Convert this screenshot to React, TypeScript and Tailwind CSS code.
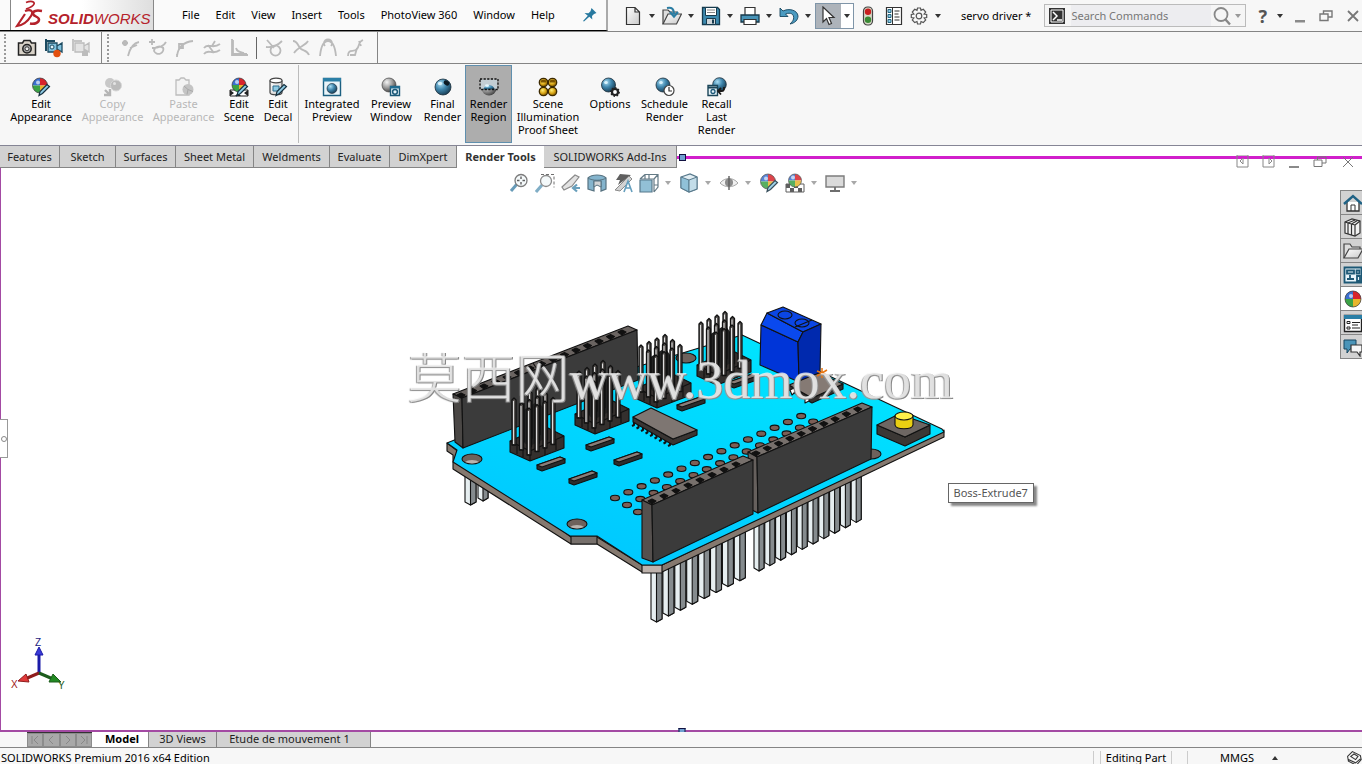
import React from 'react';

type IconProps = { children: React.ReactNode; size?: string; off?: boolean };

const Icon = ({ children, size = 'h-5 w-5', off = false }: IconProps) => (
  <svg viewBox="0 0 20 20" fill="none" className={`${size} shrink-0 ${off ? 'opacity-60' : ''}`} aria-hidden="true">
    {children}
  </svg>
);

const GradientDefs = () => (
  <svg className="absolute h-0 w-0" aria-hidden="true">
    <defs>
      <radialGradient id="ball" cx="0.35" cy="0.3" r="0.8">
        <stop offset="0" stopColor="#a8dcf2" />
        <stop offset="0.45" stopColor="#3f86ad" />
        <stop offset="1" stopColor="#123145" />
      </radialGradient>
      <radialGradient id="grayBall" cx="0.35" cy="0.3" r="0.8">
        <stop offset="0" stopColor="#f4f4f4" />
        <stop offset="0.5" stopColor="#9a9a9a" />
        <stop offset="1" stopColor="#333" />
      </radialGradient>
      <radialGradient id="goldBall" cx="0.4" cy="0.35" r="0.75">
        <stop offset="0" stopColor="#ffef7a" />
        <stop offset="0.5" stopColor="#d9a514" />
        <stop offset="1" stopColor="#5a3c00" />
      </radialGradient>
      <linearGradient id="board" x1="0" y1="1" x2="0.6" y2="0">
        <stop offset="0" stopColor="#00c3ff" />
        <stop offset="1" stopColor="#00e4ff" />
      </linearGradient>
      <linearGradient id="sheet" x1="0" y1="0" x2="1" y2="1">
        <stop offset="0" stopColor="#fff" />
        <stop offset="1" stopColor="#c9c9c9" />
      </linearGradient>
    </defs>
  </svg>
);

const Caret = ({ light = false }: { light?: boolean }) => (
  <svg viewBox="0 0 6 4" className={`h-1 w-1.5 shrink-0 ${light ? 'text-[#999]' : 'text-[#333]'}`} aria-hidden="true">
    <path d="M0 0h6L3 4z" fill="currentColor" />
  </svg>
);

const ColorBall = ({ cx = 9, cy = 8.5, r = 7.5 }) => (
  <g>
    <path d={`M${cx} ${cy}V${cy - r}A${r} ${r} 0 0 0 ${cx - r} ${cy}Z`} fill="#3b6fd0" />
    <path d={`M${cx} ${cy}V${cy - r}A${r} ${r} 0 0 1 ${cx + r} ${cy}Z`} fill="#d8242c" />
    <path d={`M${cx} ${cy}H${cx - r}A${r} ${r} 0 0 0 ${cx} ${cy + r}Z`} fill="#3ba245" />
    <path d={`M${cx} ${cy}H${cx + r}A${r} ${r} 0 0 1 ${cx} ${cy + r}Z`} fill="#e8b52c" />
    <circle cx={cx - 2} cy={cy - 3} r="2" fill="#fff" opacity="0.65" />
    <circle cx={cx} cy={cy} r={r} stroke="#333" strokeWidth="0.7" />
  </g>
);

const Pencil = () => (
  <path d="M18.5 9.5l-7 7-3.5 2 1-4 7-7z" fill="#8fcbe4" stroke="#16303f" strokeWidth="1.2" />
);

/* ---------- ribbon icons ---------- */

const EditAppearanceIcon = () => <Icon><ColorBall /><Pencil /></Icon>;

const CopyAppearanceIcon = () => (
  <Icon>
    <circle cx="7" cy="6" r="5" fill="#c8c8c8" />
    <circle cx="13" cy="8.5" r="5.5" fill="#bbb" stroke="#d8d8d8" />
    <circle cx="11.5" cy="6.5" r="1.5" fill="#e4e4e4" />
    <path d="M2 13l4 4m1-5v6H1" stroke="#b5b5b5" strokeWidth="2.4" />
  </Icon>
);

const PasteAppearanceIcon = () => (
  <Icon>
    <path d="M2 3h3l2-2h3l2 2h3v15H2z" stroke="#bdbdbd" fill="#f3f3f3" strokeWidth="1.3" />
    <circle cx="14" cy="12.5" r="5.5" fill="#c4c4c4" />
    <path d="M14 12.5L10 9m4 3.5l5 2m-5-2l-1 5" stroke="#a9a9a9" />
  </Icon>
);

const EditSceneIcon = () => (
  <Icon>
    <path d="M1 13h18v6H1z" fill="#fff" stroke="#222" />
    <path d="M1 13l4 3-4 3zm18 0l-4 3 4 3zM6 19l3-3 3 3z" fill="#222" />
    <ColorBall cx={10} cy={8} r={7} />
    <Pencil />
  </Icon>
);

const EditDecalIcon = () => (
  <Icon>
    <path d="M2 3.5v12c0 3 12 3 12 0v-12" fill="url(#sheet)" stroke="#444" strokeWidth="1.2" />
    <ellipse cx="8" cy="3.5" rx="6" ry="2.3" fill="#fff" stroke="#444" strokeWidth="1.2" />
    <path d="M5 9h6v5H5z" fill="#8fcbe4" stroke="#2c6c8c" />
    <Pencil />
  </Icon>
);

const IntegratedIcon = () => (
  <Icon>
    <path d="M1.5 1.5h17v17h-17z" fill="#e9f4f9" stroke="#1c5f80" strokeWidth="1.4" />
    <path d="M1 1h18v3.5H1z" fill="#2b7fa6" />
    <circle cx="10" cy="11.5" r="5" fill="url(#ball)" stroke="#123" strokeWidth="0.6" />
  </Icon>
);

const PreviewWindowIcon = () => (
  <Icon>
    <circle cx="8" cy="8" r="7" fill="url(#grayBall)" stroke="#444" strokeWidth="0.7" />
    <path d="M9.5 9.5h9v9h-9z" fill="#e6f3f9" stroke="#1b5878" strokeWidth="1.4" />
    <path d="M9 9h10v2.5H9z" fill="#1f6b90" />
    <circle cx="14" cy="14.8" r="2.4" stroke="#1b5878" strokeWidth="1.5" />
  </Icon>
);

const FinalIcon = () => (
  <Icon>
    <circle cx="10" cy="10" r="8" fill="url(#ball)" stroke="#1a2d3a" strokeWidth="0.8" />
    <ellipse cx="13.5" cy="6" rx="3" ry="2.2" fill="#0c1a24" transform="rotate(35 13.5 6)" />
    <ellipse cx="7" cy="6.5" rx="2.2" ry="1.8" fill="#d9f2fc" />
  </Icon>
);

const RegionIcon = () => (
  <Icon>
    <circle cx="10" cy="11" r="7.5" fill="url(#grayBall)" />
    <path d="M2 2.500h16v10H2z" fill="#c3cdd3" />
    <path d="M4 12.500a6.500 7 0 0 1 12 0z" fill="url(#ball)" />
    <ellipse cx="8" cy="8.500" rx="2" ry="1.300" fill="#e6f6fc" />
    <path d="M1 2h18v10.500H1z" stroke="#111" strokeWidth="1.300" strokeDasharray="2.200 1.400" />
  </Icon>
);

const ProofSheetIcon = () => (
  <Icon>
    {[[5.5, 5.5], [14.5, 5.5], [5.5, 14.5], [14.5, 14.5]].map(([x, y]) => (
      <circle key={`${x}-${y}`} cx={x} cy={y} r="4.2" fill="url(#goldBall)" stroke="#3c2900" strokeWidth="1.300" />
    ))}
    <path d="M2.500 5.500a3 3 0 0 1 6 0zM11.500 5.500a3 3 0 0 1 6 0z" fill="#7a5200" />
  </Icon>
);

const RenderOptionsIcon = () => (
  <Icon>
    <circle cx="8.500" cy="8" r="7" fill="url(#ball)" stroke="#1a2d3a" strokeWidth="0.800" />
    <ellipse cx="6" cy="5.500" rx="1.800" ry="1.500" fill="#d9f2fc" />
    <circle cx="15" cy="15" r="3" fill="#fff" stroke="#222" strokeWidth="2.200" />
    <circle cx="15" cy="15" r="4.200" stroke="#222" strokeWidth="1.400" strokeDasharray="1.600 1.600" />
  </Icon>
);

const ScheduleIcon = () => (
  <Icon>
    <circle cx="8" cy="8" r="7" fill="url(#ball)" stroke="#1a2d3a" strokeWidth="0.8" />
    <ellipse cx="6" cy="5.5" rx="1.8" ry="1.5" fill="#d9f2fc" />
    <circle cx="14" cy="13.5" r="5" fill="#fff" stroke="#444" strokeWidth="1.2" />
    <path d="M14 10v4h3" stroke="#333" strokeWidth="1.2" />
  </Icon>
);

const RecallIcon = () => (
  <Icon>
    <circle cx="12.5" cy="7.5" r="6.8" fill="url(#ball)" stroke="#1a2d3a" strokeWidth="0.8" />
    <path d="M1 8.500h9.500v10H1z" fill="#e6f3f9" stroke="#1b4558" strokeWidth="1.400" />
    <path d="M1 10.500h9.500" stroke="#1b4558" strokeWidth="2" />
    <circle cx="6" cy="14.500" r="2" stroke="#1b5878" strokeWidth="1.300" />
    <path d="M11 14h4c2.500 0 2-3 2-4m-3 1l-3 3 3 3.500" stroke="#1a1a1a" strokeWidth="1.800" />
  </Icon>
);

/* ---------- capture and sketch icons ---------- */

const CameraIcon = () => (
  <Icon>
    <path d="M1.500 5h4L7 2.500h6L14.500 5h4v12h-17z" fill="#d8d2c8" stroke="#222" strokeWidth="1.500" />
    <circle cx="10" cy="10.800" r="4.200" fill="#aaa" stroke="#222" strokeWidth="1.500" />
    <circle cx="10" cy="10.800" r="2" fill="#efefef" stroke="#333" />
  </Icon>
);

const RecordIcon = () => (
  <Icon>
    <path d="M2 1v12m0-10h9" stroke="#1b4a60" strokeWidth="2" />
    <path d="M4 5h9v9H4zM13 8l5-3v9l-5-3z" fill="#7fc0dc" stroke="#1b4a60" strokeWidth="1.300" />
    <circle cx="8" cy="9" r="2" fill="#e2f4fb" stroke="#1b4a60" />
    <circle cx="13" cy="15.500" r="3.700" fill="#e2500f" />
  </Icon>
);

const StopRecordIcon = () => (
  <Icon>
    <path d="M2 1v12m0-10h9" stroke="#c4c4c4" strokeWidth="2" />
    <path d="M4 5h9v9H4zM13 8l5-3v9l-5-3z" fill="#e4e4e4" stroke="#bcbcbc" strokeWidth="1.300" />
    <path d="M11 13h6v5h-6z" fill="#bcbcbc" />
  </Icon>
);

const sketchPaths = [
  'M1 5h6M4 2v6M2 3l4 4M6 3L2 7M18 4C12 5 9 10 7 18M9 10l7-3',
  'M1 4h6M4 1v6M4 10c8 0 12-2 14-6M15 9a4.500 4.500 0 1 1-9 4c0-4 6-6 9-3',
  'M2 18C3 10 8 4 18 3M4 6h4v4H4zM2 16v3',
  'M2 10c4-6 8 2 16-4M2 16c4-6 8 2 16-4M6 7l6 8M13 3l-3 5',
  'M3 1v16h16M4 2v14h14M7 10c1 4 4 4 8 5',
];

const curvePaths = [
  'M2 9c7 1 12-2 16-6M15 9a5 5 0 1 1-7 0c2-2 5-2 7 0M3 2l7 8',
  'M2 3c5 0 5 6 8 8s6 1 8 6M17 3c-2 4-10 6-14 12',
  'M2 18C3 8 5 3 10 3s7 5 8 15M7 8a4 4 0 1 1 6 0',
  'M3 18c0-8 6-3 9-7s1-7 6-9M5 17h5l2-7M14 3l2 5',
];

const SketchIcon = ({ d }: { d: string }) => (
  <Icon><path d={d} stroke="#bababa" strokeWidth="1.8" /></Icon>
);

const Grip = () => <div className="h-7 w-[2px] border-l-2 border-dotted border-[#999]" />;

/* ---------- quick access icons ---------- */

const NewIcon = () => (
  <Icon><path d="M3.500 1.500h8.500L16.500 6v12.500h-13zM12 1.500V6h4.500" fill="url(#sheet)" stroke="#333" strokeWidth="1.200" /></Icon>
);

const OpenIcon = () => (
  <Icon>
    <path d="M1 18V4h5l2 2h7v3" fill="#ddd" stroke="#444" strokeWidth="1.200" />
    <path d="M1 18l5-10h13.500l-5 10z" fill="url(#sheet)" stroke="#444" strokeWidth="1.200" />
    <path d="M5 2c5-1 7 1 7 6m-4-2l4 4.500L16 6" stroke="#2a7da3" strokeWidth="2.200" />
  </Icon>
);

const SaveIcon = () => (
  <Icon>
    <path d="M1.500 1.500h15l2 2v15h-17z" fill="#3c89ae" stroke="#163a4d" strokeWidth="1.300" />
    <path d="M4.500 1.500h11v8h-11z" fill="#fff" stroke="#163a4d" />
    <path d="M6 4h8M6 6.500h8" stroke="#888" />
    <path d="M5.500 12.500h9v6h-9z" fill="#cfd6da" stroke="#163a4d" />
    <path d="M11 13.500h2v4h-2z" fill="#163a4d" />
  </Icon>
);

const PrintIcon = () => (
  <Icon>
    <path d="M5 9V1.500h10V9" fill="#fff" stroke="#333" strokeWidth="1.200" />
    <path d="M1 9h18v7H1z" fill="#4793b7" stroke="#16394b" strokeWidth="1.300" />
    <path d="M4 13.500h12v5H4z" fill="#fff" stroke="#333" strokeWidth="1.200" />
  </Icon>
);

const UndoIcon = () => (
  <Icon><path d="M1 2v8.500h8L6.500 8c5-2 9 0 8 5-.5 2-2 3.500-3.500 5 5-1 8-4 8-8C18.500 4 10 2 4 5z" fill="#4b9bc1" stroke="#16455e" strokeWidth="0.900" /></Icon>
);

const TrafficIcon = () => (
  <Icon>
    <rect x="5.500" y="1" width="9" height="18" rx="4" fill="#d9d9c8" stroke="#444" strokeWidth="1.200" />
    <circle cx="10" cy="5.800" r="3.200" fill="#c82020" />
    <circle cx="10" cy="13.800" r="3.200" fill="#3a8a35" />
  </Icon>
);

const ListIcon = () => (
  <Icon>
    <path d="M2.500 1.500h15v17h-15z" fill="#fff" stroke="#333" strokeWidth="1.200" />
    <path d="M8.500 2v16" stroke="#333" />
    <path d="M4 3.500h3v3H4zM4 8.500h3v3H4zM4 13.500h3v3H4z" fill="#8ccbe6" stroke="#24647f" />
    <path d="M10.500 5h5M10.500 8h4M10.500 11h5M10.500 14h5" stroke="#333" strokeWidth="1.200" />
  </Icon>
);

const GearIcon = () => (
  <Icon>
    <path d="M8.500 2h3l.5 2.300 2.300-1L16.700 6l-1.600 2 2.600.5v3l-2.600.5 1.600 2-2.400 2.600-2.300-1.100-.5 2.500h-3L8 15.500l-2.300 1.100L3.300 14l1.600-2-2.600-.5v-3L4.900 8 3.300 6l2.400-2.700 2.300 1z" stroke="#555" strokeWidth="1.200" />
    <circle cx="10" cy="10" r="2.800" stroke="#555" strokeWidth="1.200" />
  </Icon>
);

const PinIcon = () => (
  <svg viewBox="0 0 14 14" className="h-3.5 w-3.5" aria-hidden="true">
    <path d="M8.500 0l5 5-2.500 1-2 2 .3 3.500-3-2.800L1 13.500 0 13l4.800-5.200L1.500 5l4 .3 2-2z" fill="#28799f" />
  </svg>
);

const quickItems: { name: string; icon: React.ReactNode; width: string }[] = [
  { name: 'New', icon: <NewIcon />, width: 'w-[39px]' },
  { name: 'Open', icon: <OpenIcon />, width: 'w-[39px]' },
  { name: 'Save', icon: <SaveIcon />, width: 'w-[39px]' },
  { name: 'Print', icon: <PrintIcon />, width: 'w-[39px]' },
  { name: 'Undo', icon: <UndoIcon />, width: 'w-9' },
];

const WindowButtons = ({ small = false }: { small?: boolean }) => (
  <>
    <button aria-label="Minimize" className="flex w-[26px] justify-center">
      <svg viewBox="0 0 14 14" className="h-3.5 w-3.5"><path d={small ? 'M2 11h10v2H2z' : 'M2 11h10v2.500H2z'} fill="#8a8a8a" /></svg>
    </button>
    <button aria-label="Restore" className="flex w-[26px] justify-center">
      <svg viewBox="0 0 14 14" className="h-3.5 w-3.5" fill="none" stroke="#777" strokeWidth={small ? 1 : 1.4}>
        <path d="M1 5h8v6.500H1zM4.500 5V2H13v6H9" />
      </svg>
    </button>
    <button aria-label="Close" className={small ? 'flex w-[29px] justify-center' : 'flex w-[23px] justify-end pr-0.5'}>
      <svg viewBox="0 0 14 14" className="h-3.5 w-3.5" stroke="#777" strokeWidth={small ? 1 : 1.8}><path d="M2 2l10 10M12 2L2 12" /></svg>
    </button>
  </>
);

const Logo = () => (
  <div className="flex w-[142px] items-center bg-gradient-to-r from-white via-white to-[#dedede] pl-[3px]">
    <svg viewBox="0 0 30 30" className="h-[30px] w-[30px] shrink-0" fill="none" stroke="#b5222b" aria-hidden="true">
      <path d="M12 2.500c5-2 9-1 8 1.500-1 2.500-5 4-8 5" strokeWidth="1.800" />
      <path d="M11 11c6-2 9 0 6 5-3 5-7 9-14 10l8-12" strokeWidth="2.200" />
      <path d="M28 11c-6-1-9 0-9 2.500 0 3 6 3 6 6 0 3-4 5-9 4" strokeWidth="2.500" />
    </svg>
    <span className="mt-2 ml-1 font-['Liberation_Sans',Arial,sans-serif] text-[15px] leading-4 text-[#b5222b] italic">
      <b>SOLID</b>WORKS
    </span>
  </div>
);

const TitleBar = () => (
  <header className="flex h-8 shrink-0 border-b border-[#858585]">
    <div className="flex border-r-2 border-b border-r-[#aaa] border-b-black bg-[#fafafa] pl-2.5">
      <div className="flex border-x border-[#888]"><Logo /></div>
      <nav className="flex items-center gap-4 pl-7">
        {['File', 'Edit', 'View', 'Insert', 'Tools', 'PhotoView 360', 'Window', 'Help'].map((m) => (
          <button key={m}>{m}</button>
        ))}
      </nav>
      <button aria-label="Pin menu" className="mr-[9px] ml-7"><PinIcon /></button>
    </div>
    <div className="flex items-center pl-[15px]">
      {quickItems.map(({ name, icon, width }) => (
        <div key={name} className={`flex items-center gap-1.5 ${width}`}>
          <button aria-label={name}>{icon}</button>
          <button aria-label={`${name} options`}><Caret /></button>
        </div>
      ))}
      <div className="flex h-[26px] w-[39px] border border-[#7f95a8] bg-white">
        <button aria-label="Select" className="flex w-[25px] items-center justify-center bg-[#adb3ba]">
          <Icon><path d="M5 1v15l3.500-3.500 2.500 6 2.500-1-2.500-6h5z" fill="#fff" stroke="#333" strokeWidth="1.200" /></Icon>
        </button>
        <button aria-label="Select options" className="flex flex-1 items-center justify-center"><Caret /></button>
      </div>
      <button aria-label="Rebuild" className="ml-1"><TrafficIcon /></button>
      <button aria-label="File properties" className="ml-1.5"><ListIcon /></button>
      <button aria-label="Options" className="ml-[5px]"><GearIcon /></button>
      <button aria-label="Options list" className="ml-1.5"><Caret /></button>
    </div>
    <div className="ml-5 flex flex-1 items-center whitespace-nowrap">servo driver *</div>
    <div className="flex items-center">
      <label className="flex h-[23px] w-[202px] items-center border border-[#bbb] bg-[#f5f5f5] pl-1">
        <svg viewBox="0 0 16 16" className="h-4 w-4 shrink-0" fill="none" aria-hidden="true">
          <path d="M0 0h16v16H0z" fill="#333" />
          <path d="M2 2h12v12H2z" stroke="#fff" />
          <path d="M4 4l4 4-4 4M8 12h5" stroke="#fff" strokeWidth="1.500" />
        </svg>
        <input
          aria-label="Search Commands"
          placeholder="Search Commands"
          className="ml-1.5 h-full w-[140px] bg-[#ededf0] placeholder:text-[#777]"
        />
        <Icon>
          <circle cx="10" cy="8.500" r="6.500" stroke="#888" strokeWidth="1.800" />
          <path d="M14.500 13.500l4.500 5" stroke="#888" strokeWidth="2.400" />
        </Icon>
        <span className="ml-1"><Caret light /></span>
      </label>
      <button aria-label="Help" className="ml-3 text-[18px] font-bold text-[#555]">?</button>
      <button aria-label="Help options" className="mr-1 ml-2.5"><Caret /></button>
      <WindowButtons />
    </div>
  </header>
);

const SketchToolbar = () => (
  <div className="flex h-8 shrink-0 items-center border-b border-[#858585]">
    <div className="flex h-full items-center gap-[7px] border-r border-[#858585] pr-2.5 pl-1">
      <Grip />
      <button aria-label="Capture" className="ml-1"><CameraIcon /></button>
      <button aria-label="Record"><RecordIcon /></button>
      <button aria-label="Stop" disabled><StopRecordIcon /></button>
    </div>
    <div className="flex h-full items-center gap-[7px] border-r border-[#858585] pr-3 pl-[5px]">
      <div className="pr-[5px]"><Grip /></div>
      {sketchPaths.map((d, i) => (
        <button key={d} disabled aria-label={`Sketch tool ${i + 1}`}><SketchIcon d={d} /></button>
      ))}
      <span className="h-[22px] w-px bg-[#666]" />
      {curvePaths.map((d, i) => (
        <button key={d} disabled aria-label={`Curve tool ${i + 1}`}><SketchIcon d={d} /></button>
      ))}
    </div>
  </div>
);

type RibbonItem = { lines: string[]; icon: React.ReactNode; width: string; disabled?: boolean; active?: boolean };

const ribbonEdit: RibbonItem[] = [
  { lines: ['Edit', 'Appearance'], icon: <EditAppearanceIcon />, width: 'w-[72px]' },
  { lines: ['Copy', 'Appearance'], icon: <CopyAppearanceIcon />, width: 'w-[71px]', disabled: true },
  { lines: ['Paste', 'Appearance'], icon: <PasteAppearanceIcon />, width: 'w-[71px]', disabled: true },
  { lines: ['Edit', 'Scene'], icon: <EditSceneIcon />, width: 'w-10' },
  { lines: ['Edit', 'Decal'], icon: <EditDecalIcon />, width: 'w-[38px]' },
];

const ribbonRender: RibbonItem[] = [
  { lines: ['Integrated', 'Preview'], icon: <IntegratedIcon />, width: 'w-[60px]' },
  { lines: ['Preview', 'Window'], icon: <PreviewWindowIcon />, width: 'w-[58px]' },
  { lines: ['Final', 'Render'], icon: <FinalIcon />, width: 'w-[45px]' },
  { lines: ['Render', 'Region'], icon: <RegionIcon />, width: 'w-[47px]', active: true },
  { lines: ['Scene', 'Illumination', 'Proof Sheet'], icon: <ProofSheetIcon />, width: 'w-[72px]' },
  { lines: ['Options'], icon: <RenderOptionsIcon />, width: 'w-[52px]' },
  { lines: ['Schedule', 'Render'], icon: <ScheduleIcon />, width: 'w-[57px]' },
  { lines: ['Recall', 'Last', 'Render'], icon: <RecallIcon />, width: 'w-[47px]' },
];

const RibbonButton = ({ item }: { item: RibbonItem }) => (
  <button
    disabled={item.disabled}
    className={`flex h-[78px] shrink-0 flex-col items-center border pt-[11px] leading-[13px] whitespace-nowrap ${item.width} ${
      item.active ? 'border-[#5f8fae] bg-[#adadad]' : 'border-transparent'
    } ${item.disabled ? 'text-[#b8b8b8]' : 'text-black'}`}
  >
    {item.icon}
    <span className="flex flex-col items-center">
      {item.lines.map((l) => <span key={l}>{l}</span>)}
    </span>
  </button>
);

const Ribbon = () => (
  <div className="flex h-[82px] shrink-0 border-b border-[#858595] pt-px pl-[5px]">
    {ribbonEdit.map((item) => <RibbonButton key={item.lines.join(' ')} item={item} />)}
    <span className="mr-[3px] ml-px h-[78px] w-px bg-[#bbb]" />
    {ribbonRender.map((item) => <RibbonButton key={item.lines.join(' ')} item={item} />)}
  </div>
);

const tabs = [
  { name: 'Features', width: 'w-[60px]' },
  { name: 'Sketch', width: 'w-[56px]' },
  { name: 'Surfaces', width: 'w-[60px]' },
  { name: 'Sheet Metal', width: 'w-[78px]' },
  { name: 'Weldments', width: 'w-[76px]' },
  { name: 'Evaluate', width: 'w-[60px]' },
  { name: 'DimXpert', width: 'w-[67px]' },
  { name: 'Render Tools', width: 'w-[87px]' },
  { name: 'SOLIDWORKS Add-Ins', width: 'w-[133px]' },
];

const TabRow = () => (
  <div className="flex h-[22px] shrink-0 bg-white">
    <div role="tablist" className="flex">
      {tabs.map(({ name, width }) => {
        const active = name === 'Render Tools';
        return (
          <button
            key={name}
            role="tab"
            aria-selected={active}
            className={`${width} shrink-0 whitespace-nowrap ${
              active ? 'bg-white font-bold text-[#333]' : 'border-r border-b border-[#858585] bg-[#d2d2d2] text-[#222]'
            }`}
          >
            {name}
          </button>
        );
      })}
    </div>
    <div className="relative flex-1">
      <div className="mt-2.5 flex h-[3px] items-center bg-[#d11fcb]">
        <span className="ml-0.5 h-[7px] w-[7px] border border-[#101040] bg-[#6f9fd0]" />
      </div>
      <div className="absolute right-0 -bottom-px flex items-center">
        {['M2 0v12h11V0zM8 3L5 6l3 3z', 'M2 0v12h11V0zM8 3l3 3-3 3z'].map((d) => (
          <button key={d} aria-label="Switch pane" className="flex w-[26px] justify-center">
            <svg viewBox="0 0 14 14" className="h-3.5 w-3.5" fill="none" stroke="#888"><path d={d} /></svg>
          </button>
        ))}
        <WindowButtons small />
      </div>
    </div>
  </div>
);

/* ---------- heads-up view toolbar ---------- */

const viewTools: { name: string; caret?: boolean; icon: React.ReactNode }[] = [
  { name: 'Zoom to fit', icon: <Icon><path d="M8 11l-6 7" stroke="#4d8aac" strokeWidth="3" /><circle cx="12" cy="7.500" r="6" fill="#f3f8fa" stroke="#666" strokeWidth="1.300" /><path d="M12 3.500v8M8 7.500h8" stroke="#444" strokeWidth="1.400" strokeDasharray="2.500 3" /></Icon> },
  { name: 'Zoom area', icon: <Icon><path d="M7 12l-6 7" stroke="#6ba0bd" strokeWidth="3" /><path d="M6 1.500h13v13" stroke="#555" strokeDasharray="3 2" /><circle cx="11" cy="8" r="5.500" fill="#f3f8fa" stroke="#777" strokeWidth="1.300" /></Icon> },
  { name: 'Previous view', icon: <Icon><path d="M1 14L14 2l4 2-7 9-8 4z" fill="#ddd" stroke="#777" strokeWidth="1.200" /><path d="M19 15h-6m3-3.500L12 15l4 3.500" stroke="#4f8fb0" strokeWidth="2.200" /></Icon> },
  { name: 'Section view', icon: <Icon><path d="M1 5c4-4 14-4 18 0v11l-5 2V8H7v10l-6-2z" fill="#6fa8c5" stroke="#3b5b6c" strokeWidth="1.200" /><path d="M1 5c4 3 14 3 18 0" stroke="#3b5b6c" /><path d="M7 8h7v6l-4-2-3 2z" fill="#c9cdd0" stroke="#3b5b6c" /></Icon> },
  { name: 'Dynamic view', icon: <Icon><path d="M7 1L3 7h4l-2 5L18 2z" fill="#444" /><path d="M2 17L16 3l3 3L7 18z" fill="#ccc" stroke="#777" /><path d="M11 19l4-11 4 11m-6-4h5" stroke="#4b8fb3" strokeWidth="1.600" /></Icon> },
  { name: 'View orientation', caret: true, icon: <Icon><path d="M6 6V1.500h13V14l-4 5M1 6h14v13M15 6l4-4.500M6 1.500L1 6m9-5v5m5 6h4" stroke="#4a6472" strokeWidth="1.200" /><path d="M1 7h12v12H1z" fill="#7fb6d0" stroke="#3b6278" strokeWidth="1.200" /></Icon> },
  { name: 'Display style', caret: true, icon: <Icon><path d="M2 4l9-3 7 3v12l-8 3-8-4z" fill="#dcebf2" stroke="#3b6278" strokeWidth="1.200" /><path d="M2 4l8 3v12l-8-4z" fill="#7db7d2" stroke="#3b6278" /><path d="M10 7l8-3v12l-8 3z" fill="#b9d8e6" stroke="#3b6278" /></Icon> },
  { name: 'Hide/show', caret: true, icon: <Icon><path d="M1 10c5-6 13-6 18 0-5 5-13 5-18 0z" fill="#eee" stroke="#999" /><circle cx="10" cy="9.500" r="4" fill="#777" /><path d="M10 3v14" stroke="#444" strokeWidth="1.400" /></Icon> },
  { name: 'Edit appearance', icon: <Icon><ColorBall /><Pencil /></Icon> },
  { name: 'Apply scene', caret: true, icon: <Icon><path d="M1 11h18v8H1z" fill="#fff" stroke="#444" /><path d="M1 11h4v4H1zM5 15h4v4H5zM9 11h4v4H9zM13 15h4v4h-4z" fill="#444" /><ColorBall cx={10} cy={7.500} r={6.500} /></Icon> },
  { name: 'View settings', caret: true, icon: <Icon><path d="M1 3h18v11H1z" fill="#d4d4d4" stroke="#666" strokeWidth="1.400" /><path d="M10 14v4m-5 0h10" stroke="#555" strokeWidth="1.800" /></Icon> },
];

const ViewToolbar = () => (
  <div className="flex h-[30px] items-center justify-center gap-1.5 pl-1">
    {viewTools.map(({ name, icon, caret }) => (
      <button key={name} aria-label={name} className="flex items-center gap-1.5 opacity-85">
        {icon}
        {caret && <span className="mr-0.5"><Caret light /></span>}
      </button>
    ))}
  </div>
);

/* ---------- the model ---------- */

// one block of 4 x 3 header pins, (x, y) is the bottom corner of its base
const PinBlock = ({ x, y }: { x: number; y: number }) => (
  <g transform={`translate(${x} ${y})`}>
    <path d="M-20-20l34-15 20 10v12L0 0l-20-9z" fill="#34302e" />
    <path d="M-20-20L0-10l34-15M0-10V0M-13-17v10M-7-14v10M15-17v11M26-21v10" />
    <path d="M-8-50L8-60 14-52V-22L0-15l-8-4z" fill="#222" stroke="none" />
    {[0, 1, 2].map((j) =>
      [3, 2, 1, 0].map((i) => {
        const px = -16 + j * 7.5 + i * 8;
        const py = -61 + j * 5 - i * 3.5;
        return (
          <g key={`${j}-${i}`}>
            <path d={`M${px - 2} ${py + 45}V${py}l2-2 2 2v45z`} fill="#55514f" strokeWidth="1.300" />
            <path d={`M${px - 0.500} ${py + 1}v43`} stroke="#ddd" />
          </g>
        );
      }),
    )}
  </g>
);

const LegPin = ({ x, top, bottom, w }: { x: number; top: number; bottom: number; w: number }) => (
  <g>
    <path d={`M${x} ${top}h${w}V${bottom - 2}l${-w / 2} 3-${w / 2}-3z`} fill="#e6eef0" />
    <path d={`M${x + w / 2} ${top}h${w / 2}V${bottom - 2}l${-w / 2} 3z`} fill="#858b8e" />
  </g>
);

const Resistor = ({ x, y }: { x: number; y: number }) => (
  <g transform={`translate(${x} ${y})`}>
    <path d="M-14 1L9-7l5 2v4L-9 7l-5-2z" fill="#2d2d2d" />
    <path d="M-14 1L9-7l5 2L-9 3z" fill="#8a7d78" />
  </g>
);

// sockets along the top of a female header
const Sockets = ({ x, y, dx, dy, n }: { x: number; y: number; dx: number; dy: number; n: number }) => (
  <>
    {Array.from({ length: n }, (_, i) => (
      <path key={i} d={`M${x + i * dx} ${y + i * dy}l4-2 4 2-4 3z`} fill="#111" />
    ))}
  </>
);

const vias = [0, 1, 2, 3, 4, 5, 6, 7, 8, 9, 10, 11, 12, 13, 14];

const Model = () => (
  <svg
    viewBox="402 300 560 330"
    className="h-[330px] w-[560px]"
    fill="none"
    stroke="#111"
    strokeWidth="1.1"
    strokeLinejoin="round"
    role="img"
    aria-label="Servo driver shield"
  >
    <LegPin x={478} top={474} bottom={500} w={10} />
    <LegPin x={465} top={470} bottom={504} w={11} />
    {[7, 6, 5, 4, 3, 2, 1, 0].map((i) => (
      <LegPin key={i} x={651 + i * 11.9} top={570 - i * 5.9} bottom={621 - i * 5.9} w={11} />
    ))}
    {[9, 8, 7, 6, 5, 4, 3, 2, 1, 0].map((i) => (
      <LegPin key={i} x={754 + i * 10.800} top={522 - i * 5} bottom={570 - i * 5.400} w={10} />
    ))}

    <path d="M447 443v8l6 4v14l118 75h26l45 28h20l282-135v-7l-282 135h-20l-45-28h-26z" fill="#85796f" />
    <path d="M571 536h26v8h-26z" fill="#77706c" />
    <path d="M642 565h20v8h-20z" fill="#bdb2ac" />
    <path d="M447 443l186-75 109-33 200 94 2 3-282 133h-20l-45-29h-27L453 462l4-12z" fill="url(#board)" />

    {[[472, 459], [577, 524], [686, 358], [871, 454]].map(([x, y]) => (
      <g key={x}>
        <ellipse cx={x} cy={y} rx="10" ry="5" fill="#6e625c" />
        {x < 600 && <path d={`M${x - 7} ${y + 3}a8 4 0 0 1 14 0a10 5 0 0 1-14 0`} fill="#b9b3ae" stroke="none" />}
      </g>
    ))}
    {vias.map((i) => (
      <g key={i} fill="#7c5f56">
        <ellipse cx={615 + i * 13.300} cy={498 - i * 5.850} rx="4.500" ry="2.700" />
        <ellipse cx={627 + i * 13.300} cy={505 - i * 5.950} rx="4.500" ry="2.700" />
        <ellipse cx={638 + i * 13.300} cy={512 - i * 6} rx="4.500" ry="2.700" />
      </g>
    ))}

    {/* back header */}
    <path d="M453 394l175-68 9 4-175 68z" fill="#6a6461" />
    <path d="M453 394l9 4 1 50-8-6z" fill="#4a4745" />
    <path d="M462 398l175-68 1 50-175 68z" fill="#3b3b3b" />
    <path d="M533 363l4 6v50" />
    <Sockets x={457} y={395} dx={11.500} dy={-4.500} n={15} />

    <Resistor x={551} y={464} />
    <Resistor x={583} y={478} />
    <Resistor x={600} y={444} />
    <Resistor x={628} y={459} />
    <Resistor x={691} y={404} />
    <Resistor x={743} y={381} />

    <PinBlock x={717} y={385} />
    <PinBlock x={657} y={408} />
    <PinBlock x={595} y={434} />
    <PinBlock x={530} y={461} />

    {/* driver chip */}
    {[0, 1, 2, 3, 4, 5, 6, 7, 8].map((i) => (
      <path key={i} d={`M${634 + i * 4.500} ${420 + i * 2.500}v5l-2 1`} strokeWidth="2" />
    ))}
    <path d="M633 417l40 22 24-9v5l-24 10-40-23z" fill="#3a3533" />
    <path d="M633 417l18-9 46 22-24 9z" fill="#7e7672" />

    {/* screw terminal */}
    <path d="M761 325l37 17 1 40-39-17z" fill="#0035d8" />
    <path d="M767 313l36 19-5 10-37-17z" fill="#0a49ee" />
    <path d="M767 313l16-6 38 17-18 8z" fill="#0b46e4" />
    <path d="M821 324l-18 8-5 10 1 40 21-9z" fill="#0029ae" />
    <path d="M795 327l17-7" />
    <ellipse cx="785" cy="315" rx="7" ry="4" />
    <ellipse cx="802" cy="323" rx="7" ry="4" />

    <path d="M789 385l23 13 31-14v5l-31 14-23-13z" fill="#33302e" />
    <path d="M789 385l30-12 24 11-31 14z" fill="#857a74" />
    <path d="M790 390l4-2 1 4-3 3zM805 397l4-1v5l-4 2z" fill="#fff" />
    <path d="M822 368v10M817 371l10 4M827 370l-10 6" stroke="#e87511" strokeWidth="1.500" />

    {/* push button */}
    <path d="M877 425l28 12 25-12v9l-25 12-28-12z" fill="#3b3734" />
    <path d="M877 425l22-11 31 11-25 12z" fill="#6e6763" />
    <path d="M895 416v9c1 5 17 5 18 0v-9z" fill="#e9cf12" />
    <ellipse cx="904" cy="416" rx="9" ry="4" fill="#fff04a" />

    {/* front headers */}
    <path d="M748 452l114-49 10 4-115 50z" fill="#77706c" />
    <path d="M748 452l9 5 1 56-8-4z" fill="#66605d" />
    <path d="M757 457l115-50-1 52-113 54z" fill="#3b3b3b" />
    <Sockets x={752} y={453} dx={11.300} dy={-4.900} n={10} />
    <path d="M642 500l101-44 10 4-101 45z" fill="#77706c" />
    <path d="M642 500l10 5 1 57-11-4z" fill="#55504e" />
    <path d="M652 505l101-45v54l-100 48z" fill="#3b3b3b" />
    <Sockets x={648} y={501} dx={12} dy={-5.300} n={8} />
  </svg>
);

const Triad = () => (
  <svg viewBox="0 0 56 58" className="h-[58px] w-14" fill="none" aria-hidden="true">
    <path d="M30 37V18" stroke="#1b1ba8" strokeWidth="3" />
    <path d="M26 19l4-8 4 8z" fill="#3a3ad8" stroke="#1b1ba8" />
    <path d="M30 37l-14 6" stroke="#8f1d1d" strokeWidth="3" />
    <path d="M17 38l-8 7 11 1z" fill="#e03a3a" stroke="#8f1d1d" />
    <path d="M30 37l14 6" stroke="#1c5c1c" strokeWidth="3" />
    <path d="M44 38l8 8-12 0z" fill="#228a22" stroke="#1c5c1c" />
    <g className="font-['Liberation_Sans',Arial,sans-serif] text-[10px]">
      <text x="26" y="10" fill="#1b1b80">Z</text>
      <text x="2" y="52" fill="#a02020">X</text>
      <text x="49" y="53" fill="#1c5c1c">Y</text>
    </g>
  </svg>
);

const paneTabs: { name: string; icon: React.ReactNode }[] = [
  { name: 'Resources', icon: <><path d="M4 9v9h12V9" fill="#fff" stroke="#333" strokeWidth="1.300" /><path d="M8 18v-6h4v6" stroke="#333" /><path d="M1 11l9-8 9 8" stroke="#1f6285" strokeWidth="2.400" /></> },
  { name: 'Design library', icon: <><path d="M2 5l7-3 8 2v12l-5 3-10-3z" fill="#f2f2f2" stroke="#333" strokeWidth="1.200" /><path d="M2 5l3 1v11M5 6l7-3M8.500 7v11M8.500 7l6-3.500M12 8v11M12 8l5-4M5 6l7 2" stroke="#333" strokeWidth="1.200" /></> },
  { name: 'File explorer', icon: <><path d="M1 17V3h6l2 3h8v3" fill="#ddd" stroke="#444" strokeWidth="1.200" /><path d="M1 17L6 8h14l-5 9z" fill="url(#sheet)" stroke="#444" strokeWidth="1.200" /></> },
  { name: 'View palette', icon: <><path d="M1.500 2.500h17v15h-17z" fill="#e8f4fa" stroke="#1d5875" strokeWidth="1.800" /><path d="M4 5.500h7v3H4zM13.500 5.500h3v3h-3zM7 10v4M4 14h7M14 11h3v5h-3z" stroke="#1d5875" strokeWidth="1.800" /></> },
  { name: 'Appearances', icon: <ColorBall cx={10} cy={10} r={8} /> },
  { name: 'Custom properties', icon: <><path d="M1.500 2.500h17v16h-17z" fill="#fff" stroke="#222" strokeWidth="1.400" /><path d="M1 2h18v4H1z" fill="#2b7fa6" /><path d="M4 8.500h3v2H4zM4 14h3v2H4z" stroke="#222" /><path d="M9 9.500h8M9 12h6M9 15h8" stroke="#222" strokeWidth="1.200" /></> },
  { name: 'Forum', icon: <><path d="M1 3h12v9H7l-3 4v-4H1z" fill="#4a94b8" stroke="#16455e" /><path d="M8 8h11v7h-2v4l-3-4H8z" fill="#f6f6f6" stroke="#333" strokeWidth="1.200" /></> },
];

const TaskPane = () => (
  <aside className="absolute top-[22px] right-0 flex w-[22px] flex-col border-t border-l border-[#858585]">
    {paneTabs.map(({ name, icon }) => (
      <button
        key={name}
        aria-label={name}
        className={`flex h-6 items-center overflow-hidden border-b border-[#858585] pl-0.5 ${name === 'Appearances' ? 'bg-white' : 'bg-[#d2d2d2]'}`}
      >
        <Icon>{icon}</Icon>
      </button>
    ))}
  </aside>
);

const Canvas = () => (
  <main className="relative flex min-h-[440px] flex-1 flex-col border-b-2 border-l border-[#a34aa3] bg-white">
    <ViewToolbar />
    <div className="flex flex-1 justify-center pt-[102px]">
      <div className="relative h-[330px]">
        <Model />
        <div
          className="absolute top-[53px] left-1.5 font-['Liberation_Serif','Noto_Sans_CJK_SC',serif] text-[54px] leading-[54px] font-light whitespace-nowrap text-white/70 [text-shadow:-1px_1px_1px_#999,1px_1px_0_#888]"
        >
          莫西网www.3dmox.com
        </div>
        <div role="tooltip" className="absolute top-[183px] left-[546px] border border-[#666] bg-white px-[5px] leading-[18px] whitespace-nowrap text-[#555] shadow-[3px_3px_2px_#888]">
          Boss-Extrude7
        </div>
      </div>
    </div>
    <div className="absolute bottom-9 left-2"><Triad /></div>
    <button
      aria-label="Show feature tree"
      className="absolute top-[251px] -left-px flex h-[39px] w-2 items-center justify-center border border-l-0 border-[#999] bg-white"
    >
      <span className="h-1.5 w-1.5 rounded-full border border-[#888]" />
    </button>
    <span className="absolute -bottom-0.5 left-1/2 h-1 w-[7px] -translate-x-1/2 border border-b-0 border-[#101040] bg-[#6f9fd0]" />
    <TaskPane />
  </main>
);

const sheetArrows = ['M3 2v8M9 2L5 6l4 4', 'M8 2L4 6l4 4', 'M4 2l4 4-4 4', 'M3 2l4 4-4 4M9 2v8'];

const SheetTabs = () => (
  <div className="flex h-[15px] shrink-0 leading-[13px]">
    <div className="ml-[27px] flex w-[65px] border-t border-[#333] bg-[#a8a8a8]">
      {sheetArrows.map((d, i) => (
        <button key={d} aria-label={`Scroll tabs ${i + 1}`} className="flex flex-1 items-center justify-center border border-[#8c8c8c]">
          <svg viewBox="0 0 12 12" className="h-3 w-3" fill="none" stroke="#888"><path d={d} /></svg>
        </button>
      ))}
    </div>
    <button className="w-[57px] border-r border-[#858585] bg-white pb-0.5 pl-1 font-bold">Model</button>
    <button className="w-[68px] border-r border-[#858585] bg-[#d2d2d2] pb-0.5 text-[#222]">3D Views</button>
    <button className="w-[154px] border-r border-[#858585] bg-[#d2d2d2] pr-2 pb-0.5 text-[#222]">Etude de mouvement 1</button>
  </div>
);

const StatusBar = () => (
  <footer className="flex h-[17px] shrink-0 items-center overflow-hidden border-t border-[#858585] pt-[3px] whitespace-nowrap">
    <span className="flex-1 pl-px">SOLIDWORKS Premium 2016 x64 Edition</span>
    <span className="h-full w-2 border-x border-[#ccc]" />
    <span className="w-[71px] border-r border-[#ccc] text-center">Editing Part</span>
    <span className="h-full w-4 border-r border-[#ccc]" />
    <button className="flex w-[174px] items-center pl-8">
      MMGS
      <span className="mr-auto ml-[18px] rotate-180"><Caret /></span>
      <Icon size="h-4 w-4"><path d="M2 8l6-6 10 5 1 5-6 7-10-5zM6 8l4-3 5 3-3 4zM3 12l9 4 6-5" stroke="#333" strokeWidth="1.300" /></Icon>
    </button>
  </footer>
);

export default function App() {
  return (
    <div className="flex min-h-screen flex-col overflow-hidden bg-[#f7f7f7] font-['Noto_Sans','Open_Sans',sans-serif] text-[11px] leading-[14px] text-black">
      <GradientDefs />
      <TitleBar />
      <SketchToolbar />
      <Ribbon />
      <TabRow />
      <Canvas />
      <SheetTabs />
      <StatusBar />
    </div>
  );
}
